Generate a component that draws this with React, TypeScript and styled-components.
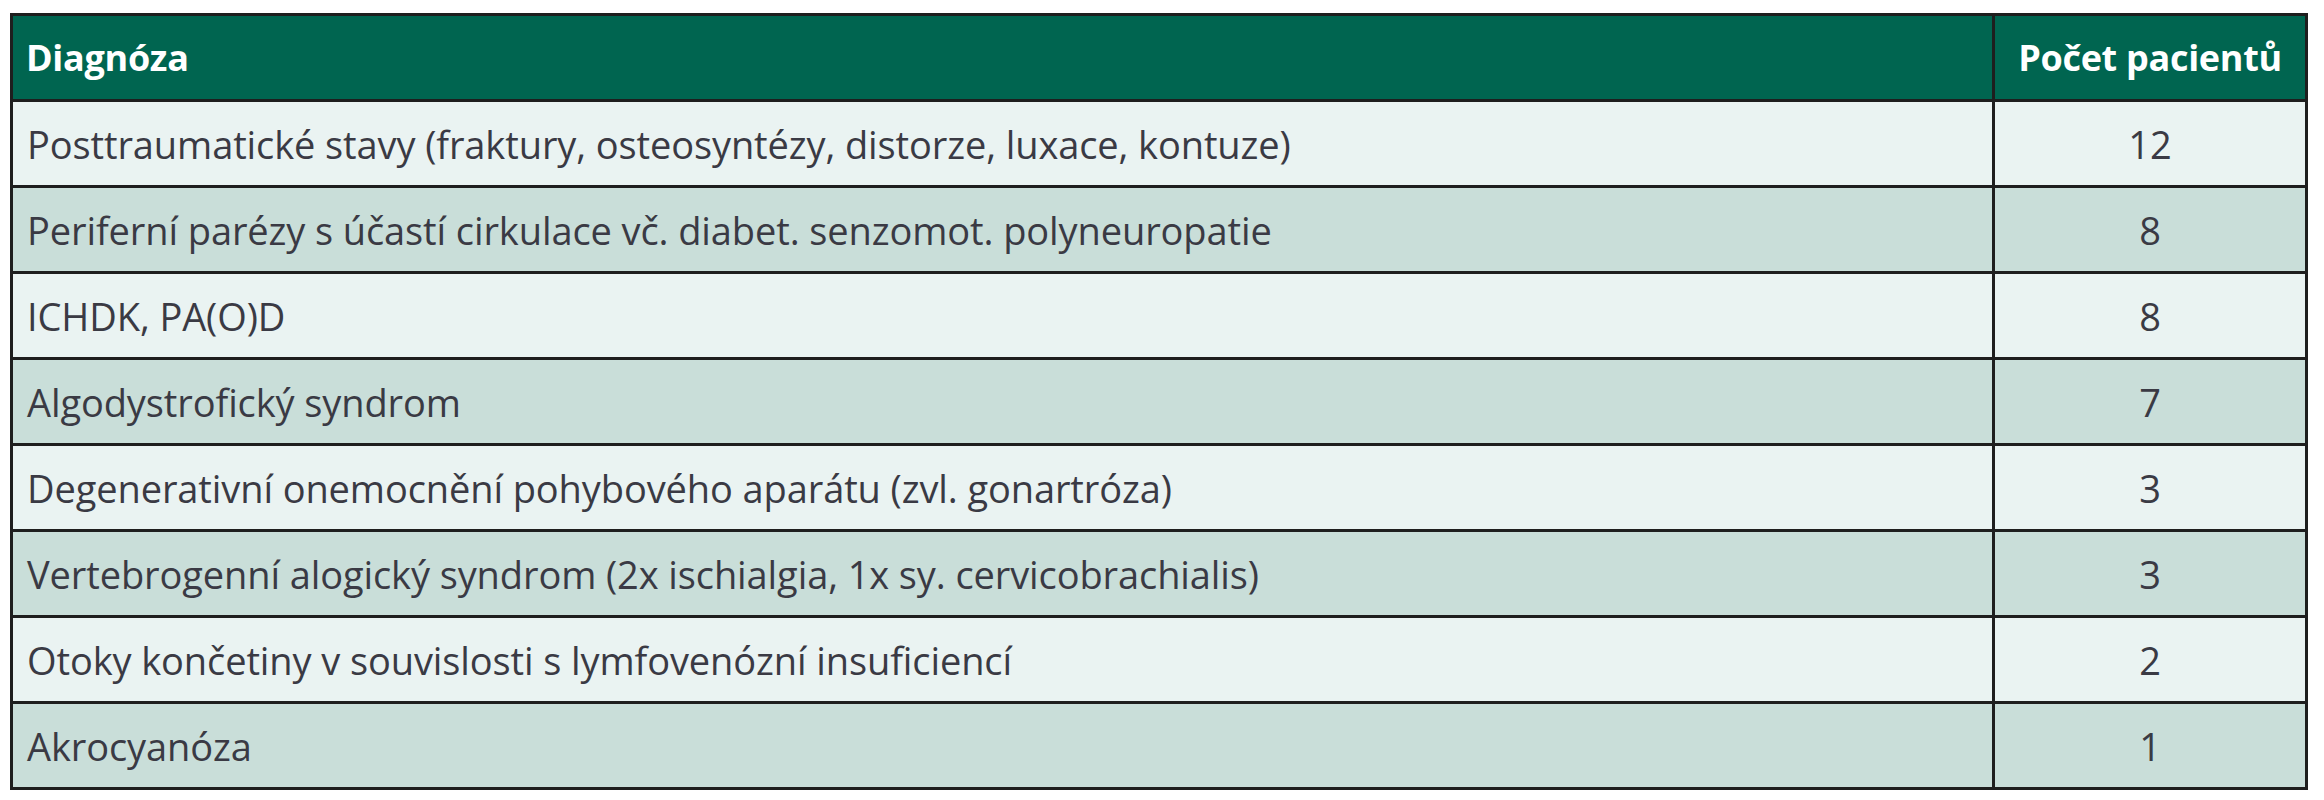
import styled, { createGlobalStyle } from "styled-components";

const GlobalStyle = createGlobalStyle`
  html, body {
    margin: 0;
    padding: 0;
    background: #ffffff;
  }
`;

const rows: { name: string; count: number }[] = [
  { name: "Posttraumatické stavy (fraktury, osteosyntézy, distorze, luxace, kontuze)", count: 12 },
  { name: "Periferní parézy s účastí cirkulace vč. diabet. senzomot. polyneuropatie", count: 8 },
  { name: "ICHDK, PA(O)D", count: 8 },
  { name: "Algodystrofický syndrom", count: 7 },
  { name: "Degenerativní onemocnění pohybového aparátu (zvl. gonartróza)", count: 3 },
  { name: "Vertebrogenní alogický syndrom (2x ischialgia, 1x sy. cervicobrachialis)", count: 3 },
  { name: "Otoky končetiny v souvislosti s lymfovenózní insuficiencí", count: 2 },
  { name: "Akrocyanóza", count: 1 },
];

const Page = styled.div`
  padding: 13px 0 0 10px;
`;

const Table = styled.table`
  width: 2298px;
  border-collapse: collapse;
  border: 3px solid #1e1e1e;
  font-family: "Open Sans", "Liberation Sans", sans-serif;
`;

const HeadCell = styled.th<{ $center?: boolean }>`
  height: 83px;
  padding: 0 13px;
  background: #006550;
  color: #ffffff;
  font-size: 36px;
  font-weight: 700;
  letter-spacing: -0.3px;
  text-align: ${({ $center }) => ($center ? "center" : "left")};
  border: 3px solid #1e1e1e;
`;

const Row = styled.tr<{ $shade: boolean }>`
  background: ${({ $shade }) => ($shade ? "#c9ded9" : "#eaf3f2")};
`;

const Cell = styled.td<{ $center?: boolean }>`
  height: 83px;
  padding: 0 14px;
  color: #3a3a44;
  font-size: 38px;
  font-weight: 400;
  letter-spacing: -0.1px;
  text-align: ${({ $center }) => ($center ? "center" : "left")};
  border: 3px solid #1e1e1e;
`;

const CountCol = styled.col`
  width: 313px;
`;

export default function App() {
  return (
    <>
      <GlobalStyle />
      <Page>
        <Table>
          <colgroup>
            <col />
            <CountCol />
          </colgroup>
          <thead>
            <tr>
              <HeadCell>Diagnóza</HeadCell>
              <HeadCell $center>Počet pacientů</HeadCell>
            </tr>
          </thead>
          <tbody>
            {rows.map((r, i) => (
              <Row key={r.name} $shade={i % 2 === 1}>
                <Cell>{r.name}</Cell>
                <Cell $center>{r.count}</Cell>
              </Row>
            ))}
          </tbody>
        </Table>
      </Page>
    </>
  );
}
